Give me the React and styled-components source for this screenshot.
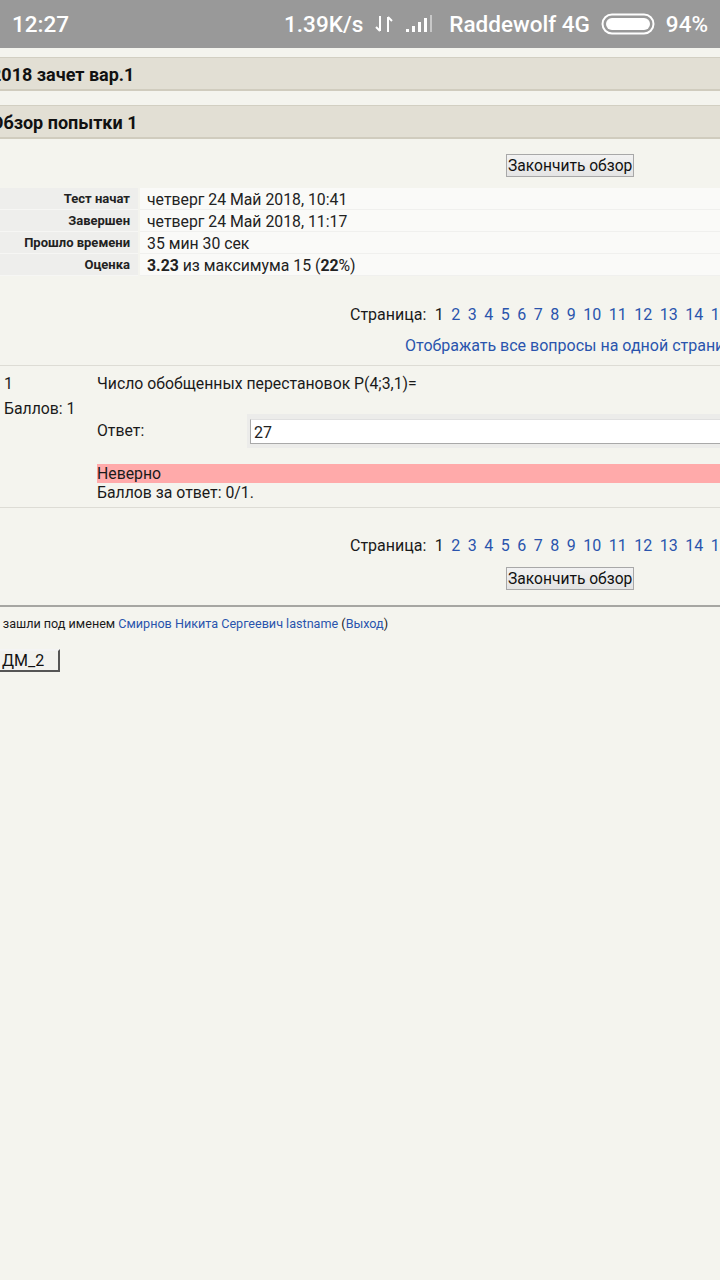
import React from "react";
import styled, { createGlobalStyle } from "styled-components";

const GlobalStyle = createGlobalStyle`
  html, body {
    margin: 0;
    padding: 0;
    background: #f4f4ee;
    overflow-x: hidden;
  }
  body {
    font-family: Roboto, "Noto Sans", sans-serif;
    color: #1a1a1a;
  }
`;

const StatusBar = styled.div`
  height: 48px;
  background: #999999;
  color: #ffffff;
  display: flex;
  align-items: center;
  padding: 0 12px 0 12px;
  font-size: 22.5px;
  font-weight: 500;
  box-sizing: border-box;
`;

const Clock = styled.span`
  flex: 1;
`;

const StatusRight = styled.div`
  display: flex;
  align-items: center;
  gap: 11px;
`;

const Carrier = styled.span`
  margin-left: 5px;
`;

const Page = styled.div`
  padding-top: 9px;
`;

const Heading = styled.div`
  background: #e2dfd4;
  border-top: 1px solid #d2cfc2;
  border-bottom: 2px solid #d0ccbe;
  height: 31px;
  line-height: 33px;
  font-size: 18px;
  font-weight: 700;
  color: #111;
  text-indent: -9px;
  white-space: nowrap;
  margin-bottom: ${({ $mb }) => $mb || 0}px;
`;

const ButtonRow = styled.div`
  padding-left: ${({ $left }) => $left}px;
  margin-top: ${({ $mt }) => $mt}px;
`;

const ReviewButton = styled.button`
  font-family: Roboto, sans-serif;
  font-size: 15.6px;
  color: #111;
  height: 23px;
  padding: 0 1px;
  background: linear-gradient(#f2f2f2, #e4e4e4);
  border: 1px solid #a8a8a8;
  border-radius: 0;
`;

const InfoTable = styled.div`
  margin-top: 11px;
  display: grid;
  grid-template-columns: 138px 1fr;
  column-gap: 2px;
`;

const InfoLabel = styled.div`
  background: #eeeeec;
  border-bottom: 1px solid #f6f6f4;
  height: 21px;
  line-height: 22px;
  text-align: right;
  padding-right: 8px;
  font-size: 13px;
  font-weight: 700;
  color: #222;
  white-space: nowrap;
`;

const InfoValue = styled.div`
  background: #fafaf8;
  border-bottom: 1px solid #f0f0ee;
  height: 21px;
  line-height: 23px;
  padding-left: 7px;
  font-size: 15.8px;
  color: #222;
  white-space: nowrap;
`;

const Paging = styled.div`
  display: flex;
  gap: 7.5px;
  padding-left: 350px;
  margin-top: ${({ $mt }) => $mt}px;
  height: 22px;
  line-height: 23px;
  font-size: 16px;
  white-space: nowrap;
  color: #1a1a1a;
`;

const PageLabel = styled.span`
  margin-right: 1px;
`;

const Link = styled.a`
  color: #2a54ad;
  text-decoration: none;
`;

const ShowAll = styled.div`
  padding-left: 405px;
  margin-top: 10px;
  font-size: 16px;
  line-height: 22px;
  white-space: nowrap;
`;

const Question = styled.div`
  margin-top: 8px;
  border-top: 1px solid #dddcd5;
  border-bottom: 1px solid #dddcd5;
  display: flex;
  padding: 8px 0 5px;
  font-size: 15.8px;
  line-height: 20px;
`;

const QInfo = styled.div`
  width: 93px;
  padding-left: 4px;
  flex-shrink: 0;
  display: flex;
  flex-direction: column;
  gap: 5px;
`;

const QContent = styled.div`
  flex: 1;
  min-width: 0;
  white-space: nowrap;
`;

const AnswerRow = styled.div`
  display: flex;
  margin-top: 20px;
`;

const AnswerLabel = styled.div`
  width: 150px;
  flex-shrink: 0;
  padding-top: 7px;
`;

const AnswerField = styled.div`
  flex: 1;
  background: #ececea;
  padding: 5px 0 4px 3px;
`;

const AnswerInput = styled.div`
  background: #fff;
  border: 1px solid #a9a9a9;
  border-top-color: #e0e0e0;
  border-right: none;
  height: 23px;
  line-height: 25px;
  padding-left: 3px;
  font-size: 16px;
  color: #222;
`;

const Feedback = styled.div`
  margin-top: 16px;
  background: #ffaaaa;
  height: 19px;
  line-height: 19px;
`;

const Mark = styled.div`
  line-height: 19px;
`;

const Footer = styled.div`
  margin-top: 15px;
  border-top: 2px solid #a6a6a2;
  padding-top: 8px;
`;

const LoginInfo = styled.div`
  font-size: 12.6px;
  line-height: 18px;
  padding-left: 4px;
  text-indent: -22px;
  white-space: nowrap;
`;

const CourseButton = styled.button`
  margin-top: 16px;
  margin-left: -12px;
  width: 72px;
  height: 23px;
  padding: 0 0 0 12px;
  text-align: left;
  font-family: Roboto, sans-serif;
  font-size: 16px;
  color: #111;
  background: #f2f2ee;
  border: 2px solid;
  border-color: #f4f4f4 #555 #555 #f4f4f4;
`;

const SignalIcon = () => (
  <svg width="28" height="18" viewBox="0 0 28 18">
    <rect x="1" y="14" width="3" height="3" fill="#fff" />
    <rect x="7" y="11" width="3" height="6" fill="#fff" />
    <rect x="13" y="7" width="3" height="10" fill="#fff" />
    <rect x="19" y="3" width="3" height="14" fill="#fff" />
    <rect x="25" y="0" width="2" height="17" fill="#c8c8c8" />
  </svg>
);

const ArrowsIcon = () => (
  <svg width="20" height="20" viewBox="0 0 20 20" fill="none" stroke="#fff" strokeWidth="2">
    <path d="M6 2v15M2 13l4 4" />
    <path d="M14 18V3M18 7l-4-4" />
  </svg>
);

const BatteryIcon = () => (
  <svg width="54" height="22" viewBox="0 0 54 22">
    <rect x="1.5" y="1.5" width="51" height="19" rx="9.5" fill="none" stroke="#fff" strokeWidth="2" />
    <rect x="5" y="5" width="44" height="12" rx="6" fill="#fff" />
  </svg>
);

const pages = [2, 3, 4, 5, 6, 7, 8, 9, 10, 11, 12, 13, 14, 15, 16];

const Pagination = ({ mt }) => (
  <Paging $mt={mt}>
    <PageLabel>Страница:</PageLabel>
    <span>1</span>
    {pages.map((p) => (
      <Link key={p} href="#">
        {p}
      </Link>
    ))}
  </Paging>
);

const info = [
  ["Тест начат", "четверг 24 Май 2018, 10:41"],
  ["Завершен", "четверг 24 Май 2018, 11:17"],
  ["Прошло времени", "35 мин 30 сек"],
];

export default function App() {
  return (
    <>
      <GlobalStyle />
      <StatusBar>
        <Clock>12:27</Clock>
        <StatusRight>
          <span>1.39K/s</span>
          <ArrowsIcon />
          <SignalIcon />
          <Carrier>Raddewolf 4G</Carrier>
          <BatteryIcon />
          <span>94%</span>
        </StatusRight>
      </StatusBar>
      <Page>
        <Heading $mb={14}>2018 зачет вар.1</Heading>
        <Heading>Обзор попытки 1</Heading>
        <ButtonRow $left={506} $mt={15}>
          <ReviewButton>Закончить обзор</ReviewButton>
        </ButtonRow>
        <InfoTable>
          {info.map(([k, v]) => (
            <React.Fragment key={k}>
              <InfoLabel>{k}</InfoLabel>
              <InfoValue>{v}</InfoValue>
            </React.Fragment>
          ))}
          <InfoLabel>Оценка</InfoLabel>
          <InfoValue>
            <b>3.23</b> из максимума 15 (<b>22</b>%)
          </InfoValue>
        </InfoTable>
        <Pagination mt={27} />
        <ShowAll>
          <Link href="#">Отображать все вопросы на одной странице</Link>
        </ShowAll>
        <Question>
          <QInfo>
            <span>1</span>
            <span>Баллов: 1</span>
          </QInfo>
          <QContent>
            <div>Число обобщенных перестановок P(4;3,1)=</div>
            <AnswerRow>
              <AnswerLabel>Ответ:</AnswerLabel>
              <AnswerField>
                <AnswerInput>27</AnswerInput>
              </AnswerField>
            </AnswerRow>
            <Feedback>Неверно</Feedback>
            <Mark>Баллов за ответ: 0/1.</Mark>
          </QContent>
        </Question>
        <Pagination mt={26} />
        <ButtonRow $left={506} $mt={11}>
          <ReviewButton>Закончить обзор</ReviewButton>
        </ButtonRow>
        <Footer>
          <LoginInfo>
            Вы зашли под именем{" "}
            <Link href="#">Смирнов Никита Сергеевич lastname</Link> (
            <Link href="#">Выход</Link>)
          </LoginInfo>
          <CourseButton>ДМ_2</CourseButton>
        </Footer>
      </Page>
    </>
  );
}
